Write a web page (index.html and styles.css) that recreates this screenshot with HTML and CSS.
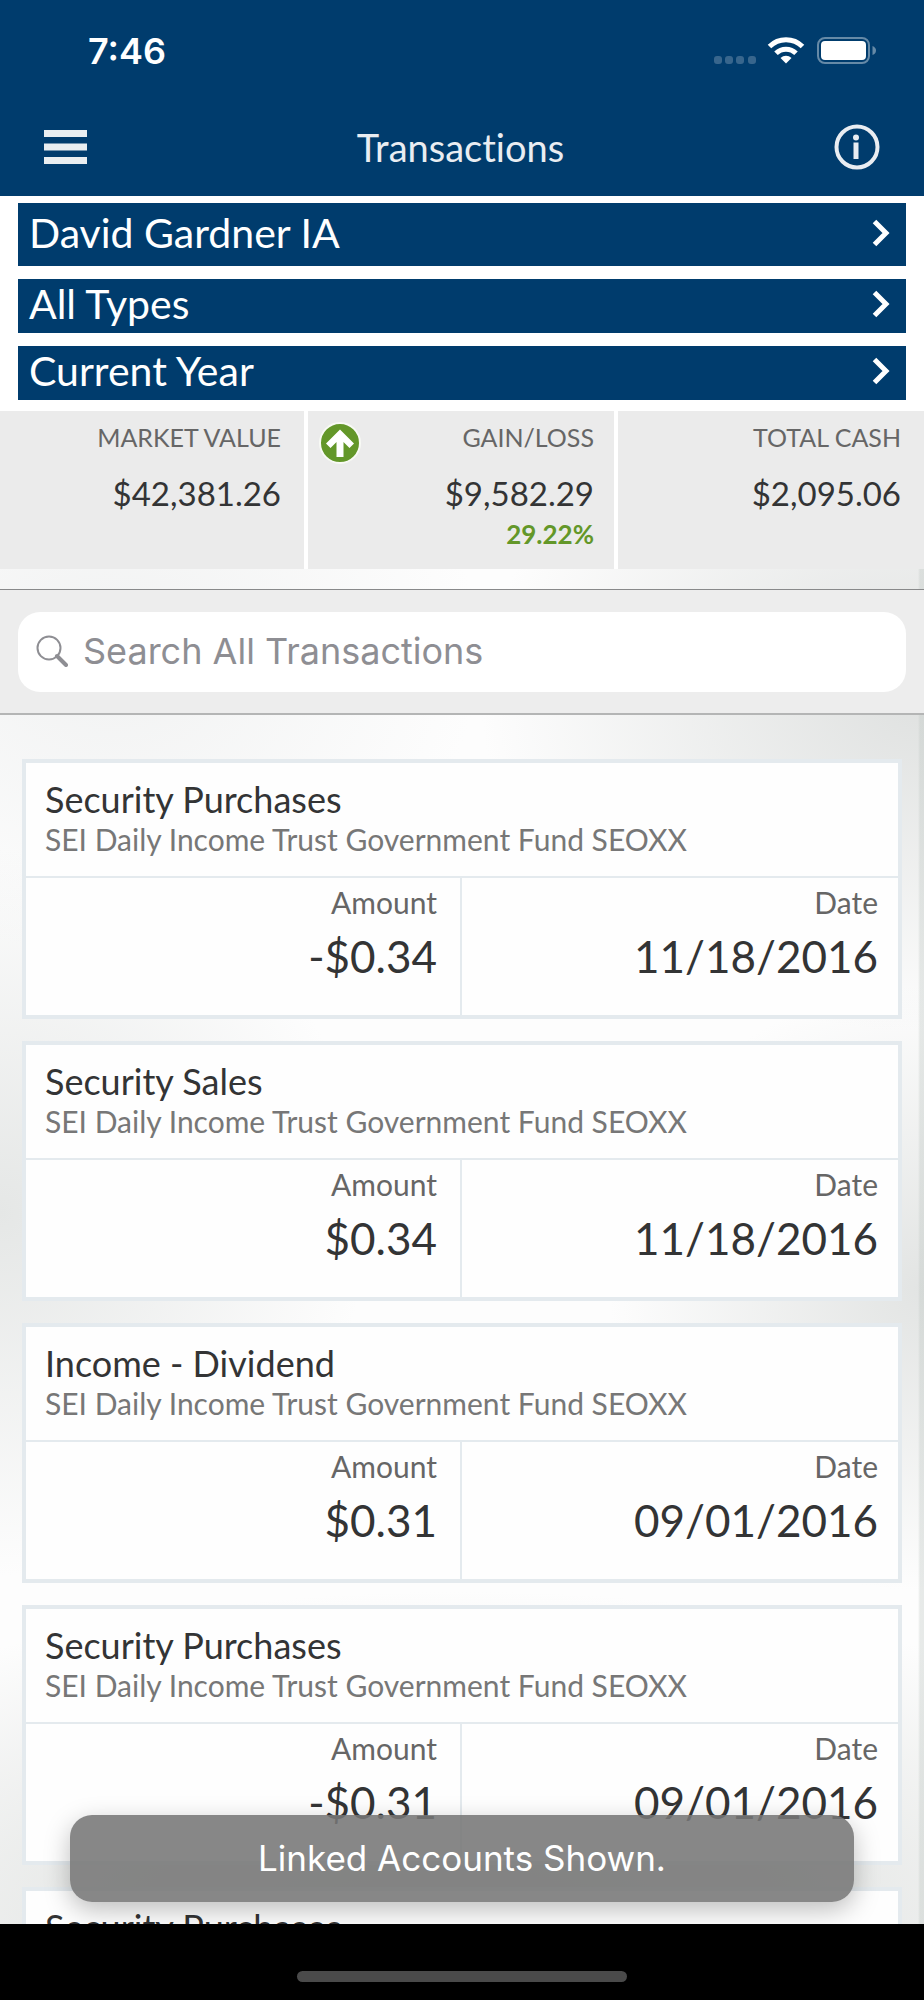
FILE: index.html
```html
<!DOCTYPE html>
<html lang="en">
<head>
<meta charset="utf-8">
<meta name="viewport" content="width=device-width, initial-scale=1">
<title>Transactions</title>
<link rel="stylesheet" href="styles.css">
</head>
<body>
<div class="app">
  <header class="top">
    <div class="status">
      <span class="time">7:46</span>
      <svg class="status-icons" width="164" height="30" viewBox="0 0 164 30" aria-hidden="true">
        <g fill="#fff" fill-opacity=".22">
          <rect x="0" y="20" width="8" height="8" rx="3"/>
          <rect x="11" y="20" width="8" height="8" rx="3"/>
          <rect x="22" y="20" width="8" height="8" rx="3"/>
          <rect x="34" y="20" width="8" height="8" rx="3"/>
        </g>
        <g fill="none" stroke="#fff" stroke-width="5">
          <path d="M55.500 10.500a23.500 23.500 0 0 1 33 0"/>
          <path d="M62 17.300a14.300 14.300 0 0 1 20 0"/>
        </g>
        <path d="M72 27.500l-5.500-5.500a8 8 0 0 1 11 0z" fill="#fff"/>
        <rect x="104" y="2" width="51" height="25" rx="7" fill="none" stroke="#fff" stroke-opacity=".4" stroke-width="2"/>
        <rect x="107" y="5" width="45" height="19" rx="4" fill="#fff"/>
        <path d="M158.500 10v9q3.500-1.500 3.500-4.500t-3.500-4.500z" fill="#fff" fill-opacity=".4"/>
      </svg>
    </div>
    <div class="nav">
      <button class="icon-button" type="button" aria-label="Menu">
        <svg width="43" height="34" viewBox="0 0 43 34"><path d="M0 0h43v7H0zM0 13.500h43v7H0zM0 27h43v7H0z" fill="#e9eef1"/></svg>
      </button>
      <h1 class="title">Transactions</h1>
      <button class="icon-button" type="button" aria-label="Information">
        <svg width="46" height="46" viewBox="0 0 46 46"><circle cx="23" cy="23" r="20.500" fill="none" stroke="#e9edf2" stroke-width="4"/><circle cx="22" cy="13.500" r="3" fill="#e9edf2"/><path d="M19.500 18.500h5v16.500h-5z" fill="#e9edf2"/></svg>
      </button>
    </div>
  </header>

  <nav class="filters" aria-label="Filters">
    <button class="filter filter-account" type="button"><span>David Gardner IA</span><svg class="chevron" width="18" height="28" viewBox="0 0 18 28"><path d="M2.500 2.500L14 14 2.500 25.500"/></svg></button>
    <button class="filter" type="button"><span>All Types</span><svg class="chevron" width="18" height="28" viewBox="0 0 18 28"><path d="M2.500 2.500L14 14 2.500 25.500"/></svg></button>
    <button class="filter" type="button"><span>Current Year</span><svg class="chevron" width="18" height="28" viewBox="0 0 18 28"><path d="M2.500 2.500L14 14 2.500 25.500"/></svg></button>
  </nav>

  <main class="content">
    <dl class="summary">
      <div class="stat"><dt>MARKET VALUE</dt><dd>$42,381.26</dd></div>
      <div class="stat">
        <svg class="trend" width="42" height="42" viewBox="0 0 42 42" aria-hidden="true"><circle cx="21" cy="21" r="20" fill="#639729" stroke="#f8faf5" stroke-width="2"/><path d="M21 7.500L35 21.500l-4.500 4.500-6-6v15h-7v-15l-6 6L7 21.500z" fill="#fff"/></svg>
        <dt>GAIN/LOSS</dt><dd>$9,582.29</dd><dd class="percent">29.22%</dd>
      </div>
      <div class="stat"><dt>TOTAL CASH</dt><dd>$2,095.06</dd></div>
    </dl>

    <form class="search" role="search">
      <label class="search-box">
        <svg width="32" height="32" viewBox="0 0 32 32" fill="none" stroke="#8e8e93" aria-hidden="true"><circle cx="13" cy="13" r="11.500" stroke-width="2"/><path d="M21 21l9 9" stroke-width="4" stroke-linecap="round"/></svg>
        <input class="search-input" type="search" placeholder="Search All Transactions" aria-label="Search All Transactions">
      </label>
    </form>

    <section class="list" aria-label="Transactions">
      <article class="card">
        <header class="card-head"><h2>Security Purchases</h2><p>SEI Daily Income Trust Government Fund SEOXX</p></header>
        <dl class="card-data"><div><dt>Amount</dt><dd>-$0.34</dd></div><div><dt>Date</dt><dd>11/18/2016</dd></div></dl>
      </article>
      <article class="card">
        <header class="card-head"><h2>Security Sales</h2><p>SEI Daily Income Trust Government Fund SEOXX</p></header>
        <dl class="card-data"><div><dt>Amount</dt><dd>$0.34</dd></div><div><dt>Date</dt><dd>11/18/2016</dd></div></dl>
      </article>
      <article class="card">
        <header class="card-head"><h2>Income - Dividend</h2><p>SEI Daily Income Trust Government Fund SEOXX</p></header>
        <dl class="card-data"><div><dt>Amount</dt><dd>$0.31</dd></div><div><dt>Date</dt><dd>09/01/2016</dd></div></dl>
      </article>
      <article class="card">
        <header class="card-head"><h2>Security Purchases</h2><p>SEI Daily Income Trust Government Fund SEOXX</p></header>
        <dl class="card-data"><div><dt>Amount</dt><dd>-$0.31</dd></div><div><dt>Date</dt><dd>09/01/2016</dd></div></dl>
      </article>
      <article class="card">
        <header class="card-head"><h2>Security Purchases</h2></header>
      </article>
    </section>

    <div class="toast" role="status">Linked Accounts Shown.</div>
  </main>

  <footer class="home"><span class="home-bar"></span></footer>
</div>
</body>
</html>
```

FILE: styles.css
```css
* { box-sizing: border-box; }

body, h1, h2, p, dl, dd { margin: 0; }

body {
  font-family: Lato, "Noto Sans", sans-serif;
  font-variant-ligatures: none;
  color: #333435;
  background: #000;
}

button, input { font: inherit; }

.app {
  display: flex;
  flex-direction: column;
  height: 100vh;
  background: #fff;
}

.top {
  flex: none;
  background: #003c6d;
  color: #e9edf2;
}

.status {
  display: flex;
  justify-content: space-between;
  align-items: center;
  height: 102px;
  padding: 0 46px 0 88px;
}

.time {
  font: 600 36px/44px Inter, sans-serif;
  color: #fff;
}

.nav {
  display: flex;
  justify-content: space-between;
  align-items: center;
  height: 94px;
  padding: 0 44px 4px;
}

.icon-button {
  display: flex;
  padding: 0;
  border: 0;
  background: none;
}

.title {
  font-size: 38px;
  line-height: 48px;
  font-weight: 400;
}

.filters {
  flex: none;
  display: flex;
  flex-direction: column;
  gap: 13px;
  padding: 7px 18px 11px;
}

.filter {
  display: flex;
  justify-content: space-between;
  align-items: center;
  height: 54px;
  padding: 0 16px 4px 11px;
  border: 0;
  background: #003c6d;
  color: #fff;
  font-size: 41px;
  line-height: 48px;
  text-align: left;
}

.filter-account { height: 63px; }

.chevron {
  fill: none;
  stroke: #fff;
  stroke-width: 5;
}

.content {
  position: relative;
  flex: 1;
  min-height: 0;
  display: flex;
  flex-direction: column;
  overflow: hidden;
  background:
    linear-gradient(to left, rgba(190, 198, 194, .35) 4px, transparent 6px),
    radial-gradient(ellipse 48% 22% at 100% 19%, #dfe1e0, transparent),
    radial-gradient(ellipse 40% 24% at 0% 53%, #e5e7e6, transparent),
    radial-gradient(ellipse 34% 20% at 100% 58%, #e2e4e3, transparent),
    radial-gradient(ellipse 40% 20% at 12% 16%, #f1f2f2, transparent),
    radial-gradient(ellipse 90% 22% at 50% 100%, #d6d9d7, transparent),
    #fdfdfd;
}

.summary {
  flex: none;
  display: grid;
  grid-template-columns: 304px 1fr 306px;
  gap: 4px;
  background: #fff;
}

.stat {
  position: relative;
  min-height: 158px;
  padding: 10px 20px 10px 12px;
  background: #ebebeb;
  text-align: right;
}

.stat:first-child, .stat:last-child { padding-right: 23px; }

.stat dt {
  font-size: 25px;
  line-height: 32px;
  color: #666;
}

.stat dd {
  margin-top: 18px;
  font-size: 33px;
  line-height: 44px;
}

.stat .percent {
  margin-top: 4px;
  font-size: 26px;
  line-height: 30px;
  font-weight: 700;
  color: #639729;
}

.trend {
  position: absolute;
  left: 11px;
  top: 11px;
}

.search {
  flex: none;
  margin-top: 20px;
  padding: 22px 18px 21px;
  border-top: 1px solid #88898a;
  border-bottom: 2px solid #b4b5b5;
  background: #ededed;
}

.search-box {
  display: flex;
  align-items: center;
  gap: 15px;
  height: 80px;
  padding: 0 18px 2px;
  border-radius: 22px;
  background: #fff;
}

.search-input {
  flex: 1;
  min-width: 0;
  padding: 0;
  border: 0;
  outline: 0;
  background: none;
  appearance: none;
  font: 400 36px/48px Inter, sans-serif;
  color: #333435;
}

.search-input::placeholder { color: #8e8e93; opacity: 1; }

.list {
  flex: 1;
  min-height: 0;
  overflow: hidden;
  display: flex;
  flex-direction: column;
  gap: 22px;
  padding: 44px 22px 0;
}

.card {
  flex: none;
  border: 4px solid #e4eaee;
  background: #fefefe;
}

.card-head {
  padding: 14px 19px 19px;
  border-bottom: 2px solid #e4eaee;
}

.card-head h2 {
  font-size: 36px;
  line-height: 44px;
  font-weight: 400;
}

.card-head p {
  font-size: 30px;
  line-height: 36px;
  color: #777;
}

.card-data {
  display: grid;
  grid-template-columns: 1fr 1fr;
  text-align: right;
}

.card-data > div {
  min-height: 137px;
  padding: 6px 20px 8px;
}

.card-data > div:first-child {
  padding-right: 23px;
  border-right: 2px solid #e4eaee;
}

.card-data dt {
  font-size: 30px;
  line-height: 36px;
  color: #666;
}

.card-data dd {
  margin-top: 8px;
  font-size: 44px;
  line-height: 56px;
}

.toast {
  position: absolute;
  left: 70px;
  right: 70px;
  bottom: 22px;
  padding: 20px;
  border-radius: 22px;
  background: rgba(118, 118, 118, .88);
  box-shadow: 0 8px 26px rgba(0, 0, 0, .26);
  color: #fff;
  font: 400 35px/47px Inter, sans-serif;
  text-align: center;
}

.home {
  flex: none;
  display: flex;
  justify-content: center;
  align-items: flex-end;
  height: 76px;
  padding-bottom: 18px;
  background: #000;
}

.home-bar {
  width: 330px;
  height: 11px;
  border-radius: 6px;
  background: #4a4a4a;
}
```
